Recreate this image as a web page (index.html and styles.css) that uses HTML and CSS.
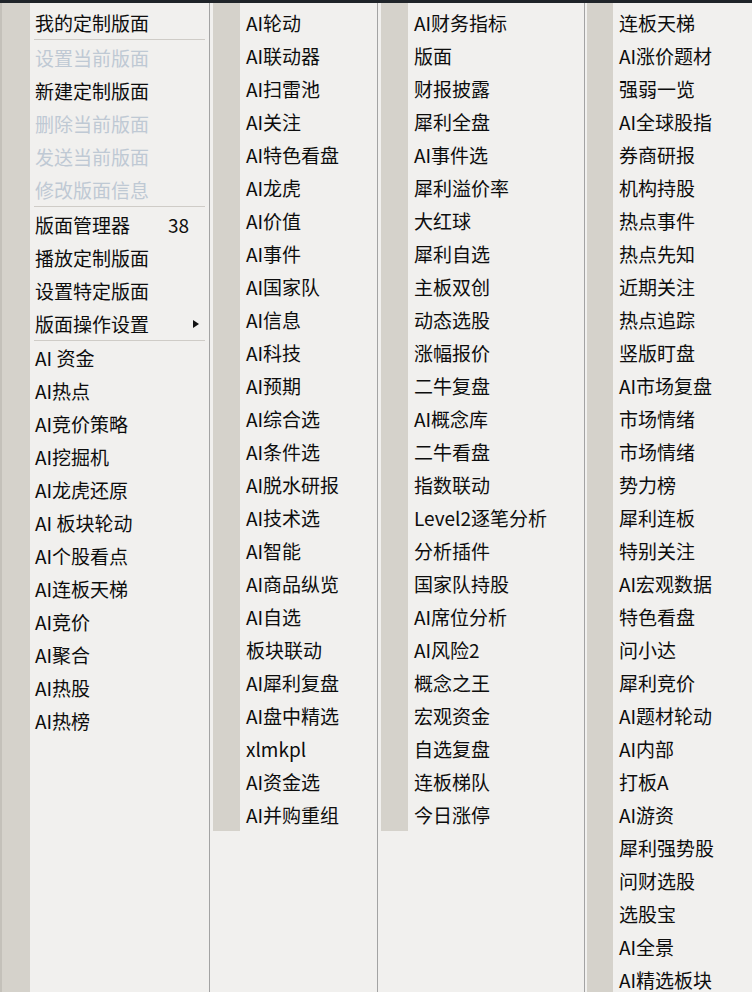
FILE: index.html
```html
<!DOCTYPE html>
<html lang="zh-CN">
<head>
<meta charset="utf-8">
<title>定制版面菜单</title>
<link rel="stylesheet" href="styles.css">
</head>
<body>
<div class="topbar"></div>
<div class="menu">
  <div class="col c1">
    <ul class="items full">
      <li>我的定制版面</li>
      <li class="sep"></li>
      <li class="dis">设置当前版面</li>
      <li>新建定制版面</li>
      <li class="dis">删除当前版面</li>
      <li class="dis">发送当前版面</li>
      <li class="dis">修改版面信息</li>
      <li class="sep"></li>
      <li><span>版面管理器</span><span class="key">38</span></li>
      <li>播放定制版面</li>
      <li>设置特定版面</li>
      <li><span>版面操作设置</span><span class="arrow"></span></li>
      <li class="sep thin"></li>
      <li>AI 资金</li>
      <li>AI热点</li>
      <li>AI竞价策略</li>
      <li>AI挖掘机</li>
      <li>AI龙虎还原</li>
      <li>AI 板块轮动</li>
      <li>AI个股看点</li>
      <li>AI连板天梯</li>
      <li>AI竞价</li>
      <li>AI聚合</li>
      <li>AI热股</li>
      <li>AI热榜</li>
    </ul>
  </div>
  <div class="col c2">
    <ul class="items">
      <li>AI轮动</li>
      <li>AI联动器</li>
      <li>AI扫雷池</li>
      <li>AI关注</li>
      <li>AI特色看盘</li>
      <li>AI龙虎</li>
      <li>AI价值</li>
      <li>AI事件</li>
      <li>AI国家队</li>
      <li>AI信息</li>
      <li>AI科技</li>
      <li>AI预期</li>
      <li>AI综合选</li>
      <li>AI条件选</li>
      <li>AI脱水研报</li>
      <li>AI技术选</li>
      <li>AI智能</li>
      <li>AI商品纵览</li>
      <li>AI自选</li>
      <li>板块联动</li>
      <li>AI犀利复盘</li>
      <li>AI盘中精选</li>
      <li>xlmkpl</li>
      <li>AI资金选</li>
      <li>AI并购重组</li>
    </ul>
  </div>
  <div class="col c3">
    <ul class="items">
      <li>AI财务指标</li>
      <li>版面</li>
      <li>财报披露</li>
      <li>犀利全盘</li>
      <li>AI事件选</li>
      <li>犀利溢价率</li>
      <li>大红球</li>
      <li>犀利自选</li>
      <li>主板双创</li>
      <li>动态选股</li>
      <li>涨幅报价</li>
      <li>二牛复盘</li>
      <li>AI概念库</li>
      <li>二牛看盘</li>
      <li>指数联动</li>
      <li>Level2逐笔分析</li>
      <li>分析插件</li>
      <li>国家队持股</li>
      <li>AI席位分析</li>
      <li>AI风险2</li>
      <li>概念之王</li>
      <li>宏观资金</li>
      <li>自选复盘</li>
      <li>连板梯队</li>
      <li>今日涨停</li>
    </ul>
  </div>
  <div class="col c4">
    <ul class="items full">
      <li>连板天梯</li>
      <li>AI涨价题材</li>
      <li>强弱一览</li>
      <li>AI全球股指</li>
      <li>券商研报</li>
      <li>机构持股</li>
      <li>热点事件</li>
      <li>热点先知</li>
      <li>近期关注</li>
      <li>热点追踪</li>
      <li>竖版盯盘</li>
      <li>AI市场复盘</li>
      <li>市场情绪</li>
      <li>市场情绪</li>
      <li>势力榜</li>
      <li>犀利连板</li>
      <li>特别关注</li>
      <li>AI宏观数据</li>
      <li>特色看盘</li>
      <li>问小达</li>
      <li>犀利竞价</li>
      <li>AI题材轮动</li>
      <li>AI内部</li>
      <li>打板A</li>
      <li>AI游资</li>
      <li>犀利强势股</li>
      <li>问财选股</li>
      <li>选股宝</li>
      <li>AI全景</li>
      <li>AI精选板块</li>
    </ul>
  </div>
</div>
</body>
</html>
```

FILE: styles.css
```css
html, body {
  margin: 0;
  padding: 0;
  height: 992px;
  overflow: hidden;
  background: #f1f0ee;
}

body {
  font-family: "Noto Sans CJK SC", "Noto Sans", sans-serif;
  font-size: 19px;
  color: #0d0d0d;
}

.topbar {
  height: 3px;
  background: #1f2429;
}

.menu {
  display: flex;
  height: 989px;
  background: #f1f0ee;
}

.col {
  display: flex;
  align-items: flex-start;
  box-sizing: border-box;
  height: 100%;
}

.c1 {
  width: 210px;
  border-left: 2px solid #c4c1ba;
  border-right: 1px solid #a3a3a3;
}

.c2 {
  width: 168px;
  padding-left: 3px;
  border-right: 1px solid #a3a3a3;
}

.c3 {
  width: 207px;
  padding-left: 3px;
  border-right: 1px solid #a3a3a3;
}

.c4 {
  width: 167px;
  padding-left: 2px;
}

.items {
  list-style: none;
  margin: 0;
  padding: 3px 0 0 0;
  flex: 1;
  border-left: 27px solid #d5d2cb;
  box-sizing: border-box;
}

.c1 .items {
  border-left-width: 28px;
}

.c4 .items {
  border-left-width: 26px;
}

.items.full {
  align-self: stretch;
}

.items li {
  display: flex;
  align-items: center;
  height: 33px;
  line-height: 33px;
  padding-left: 6px;
  white-space: nowrap;
}

.c1 .items li {
  padding-left: 5px;
}

.items li.dis {
  color: #bfc9d4;
}

.items li.sep {
  padding: 0;
  margin: 0 4px;
  border-top: 1px solid #cfccc7;
  height: 1px;
  box-sizing: content-box;
}

.items li.sep.thin {
  height: 0;
}

.key {
  margin-left: auto;
  padding-right: 20px;
}

.arrow {
  margin-left: auto;
  margin-right: 10px;
  width: 0;
  height: 0;
  border-left: 6px solid #111;
  border-top: 4px solid transparent;
  border-bottom: 4px solid transparent;
}
```
